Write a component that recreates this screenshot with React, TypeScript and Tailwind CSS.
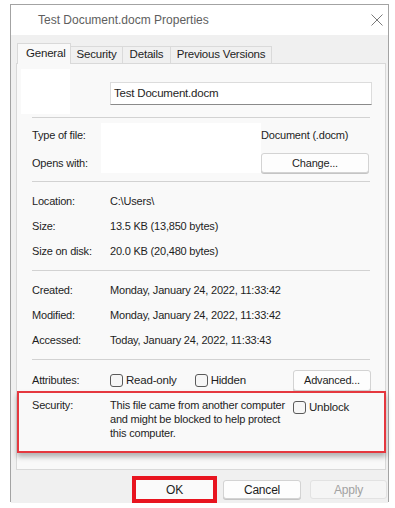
import type { ReactNode } from 'react';

const font = { fontFamily: '"Liberation Sans", Arial, sans-serif' };

function Separator({ top }: { top: string }) {
  return <div className={`ml-[15px] w-[338px] h-px bg-[#d2d2d2] ${top}`} />;
}

function InfoRow({ label, children }: { label: string; children?: ReactNode }) {
  return (
    <div className="flex items-center h-[25px] pl-[15px]">
      <span className="w-[78px] shrink-0">{label}</span>
      <span>{children}</span>
    </div>
  );
}

function Checkbox({ label }: { label: string }) {
  return (
    <span className="flex items-center">
      <span className="w-[13px] h-[13px] rounded-[3px] border border-[#5a5a5a] bg-[#f6f6f6]" />
      <span className="ml-[3px] text-[11.5px]">{label}</span>
    </span>
  );
}

function SmallButton({ label, w }: { label: string; w: string }) {
  return (
    <div className={`${w} flex items-center justify-center rounded-[3px] border border-[#d3d3d3] bg-[#fdfdfd] shadow-[0_1px_0_#c4c4c4]`}>
      {label}
    </div>
  );
}

export default function App() {
  const tabs = [
    { name: 'Security', w: 'w-[52px]' },
    { name: 'Details', w: 'w-[48px]' },
    { name: 'Previous Versions', w: 'w-[101px]' },
  ];

  return (
    <div className="w-[395px] h-[508px] bg-white overflow-hidden text-[11px] text-[#1e1e1e] tracking-[-0.2px]" style={font}>
      <div className="ml-[10px] mt-[4px] w-[379px] h-[498px] border border-[#a3a3a3] flex flex-col">
        {/* title bar */}
        <div className="h-[30px] bg-white flex items-center shrink-0">
          <span className="ml-[27px] text-[12px] text-[#5e5e5e] tracking-normal">Test Document.docm Properties</span>
          <svg className="ml-auto mr-[5px]" width="12" height="12" viewBox="0 0 12 12">
            <path d="M0.5 0.5 L11.5 11.5 M11.5 0.5 L0.5 11.5" stroke="#7a7a7a" strokeWidth="1" />
          </svg>
        </div>

        <div className="flex-1 bg-[#f0f0f0] flex flex-col">
          {/* tabs */}
          <div className="flex items-end pl-[6px] pt-[7px] h-[28px]">
            <div className="w-[54px] h-[21px] border border-b-0 border-[#d9d9d9] bg-[#f9f9f9] -mb-px relative z-10 pl-[8px] pt-[1px] text-[11.5px]">
              General
            </div>
            {tabs.map((t) => (
              <div key={t.name} className={`${t.w} h-[17px] border border-l-0 border-b-0 border-[#dadada] bg-[#f0f0f0] flex items-center justify-center text-[11.5px]`}>
                {t.name}
              </div>
            ))}
          </div>

          {/* panel */}
          <div className="ml-[5px] w-[370px] h-[407px] border border-[#d9d9d9] bg-[#f9f9f9] flex flex-col">
            <div className="flex items-start pt-[5px] pl-[4px]">
              <div className="w-[49px] h-[45px] bg-white" />
              <div className="ml-[40px] mt-[13px] w-[262px] h-[23px] bg-white border border-[#dcdcdc] border-b-[#8a8a8a] flex items-center pl-[3px] text-[11.5px]">
                Test Document.docm
              </div>
            </div>
            <Separator top="mt-[3px]" />

            <div className="ml-[15px] mt-[5px] grid grid-cols-[69px_160px_108px] grid-rows-[25px_25px]">
              <span className="self-center">Type of file:</span>
              <div className="row-span-2 bg-white" />
              <span className="self-center">Document (.docm)</span>
              <span className="self-end h-[20px] flex items-center">Opens with:</span>
              <div className="self-end h-[20px] flex">
                <SmallButton label="Change..." w="w-[108px]" />
              </div>
            </div>
            <Separator top="mt-[8px]" />

            <div className="mt-[7px]">
              <InfoRow label="Location:">C:\Users\</InfoRow>
              <InfoRow label="Size:">13.5 KB (13,850 bytes)</InfoRow>
              <InfoRow label="Size on disk:">20.0 KB (20,480 bytes)</InfoRow>
            </div>
            <Separator top="mt-[6px]" />

            <div className="mt-[7px]">
              <InfoRow label="Created:">Monday, January 24, 2022, 11:33:42</InfoRow>
              <InfoRow label="Modified:">Monday, January 24, 2022, 11:33:42</InfoRow>
              <InfoRow label="Accessed:">Today, January 24, 2022, 11:33:43</InfoRow>
            </div>
            <Separator top="mt-[6px]" />

            <div className="mt-[10px] h-[21px] flex items-center pl-[15px]">
              <span className="w-[78px] shrink-0">Attributes:</span>
              <Checkbox label="Read-only" />
              <span className="ml-[18px]">
                <Checkbox label="Hidden" />
              </span>
              <div className="ml-auto mr-[14px] h-[21px] flex">
                <SmallButton label="Advanced..." w="w-[78px]" />
              </div>
            </div>

            {/* security row, highlighted */}
            <div className="w-[369px] h-[62px] border-2 border-[#e5383f] shadow-[0_4px_5px_rgba(0,0,0,0.28)] flex pl-[13px] pt-[5px]">
              <span className="w-[78px] shrink-0 leading-[14px]">Security:</span>
              <p className="w-[181px] leading-[14px]">
                This file came from another computer and might be blocked to help protect this computer.
              </p>
              <span className="ml-[2px] mt-[1px] h-[13px]">
                <Checkbox label="Unblock" />
              </span>
            </div>
          </div>

          {/* dialog buttons */}
          <div className="flex items-start pl-[121px] text-[12px]">
            <div className="mt-[6px] w-[85px] h-[27px] border-4 border-[#e8141f] bg-[#fafafa] flex items-center justify-center">
              OK
            </div>
            <div className="ml-[6px] mt-[10px] w-[78px] h-[19px] flex">
              <SmallButton label="Cancel" w="w-[78px]" />
            </div>
            <div className="ml-[9px] mt-[10px] w-[77px] h-[19px] rounded-[3px] border border-[#e2e2e2] bg-[#f5f5f5] text-[#a2a2a2] flex items-center justify-center">
              Apply
            </div>
          </div>
        </div>
      </div>
    </div>
  );
}
